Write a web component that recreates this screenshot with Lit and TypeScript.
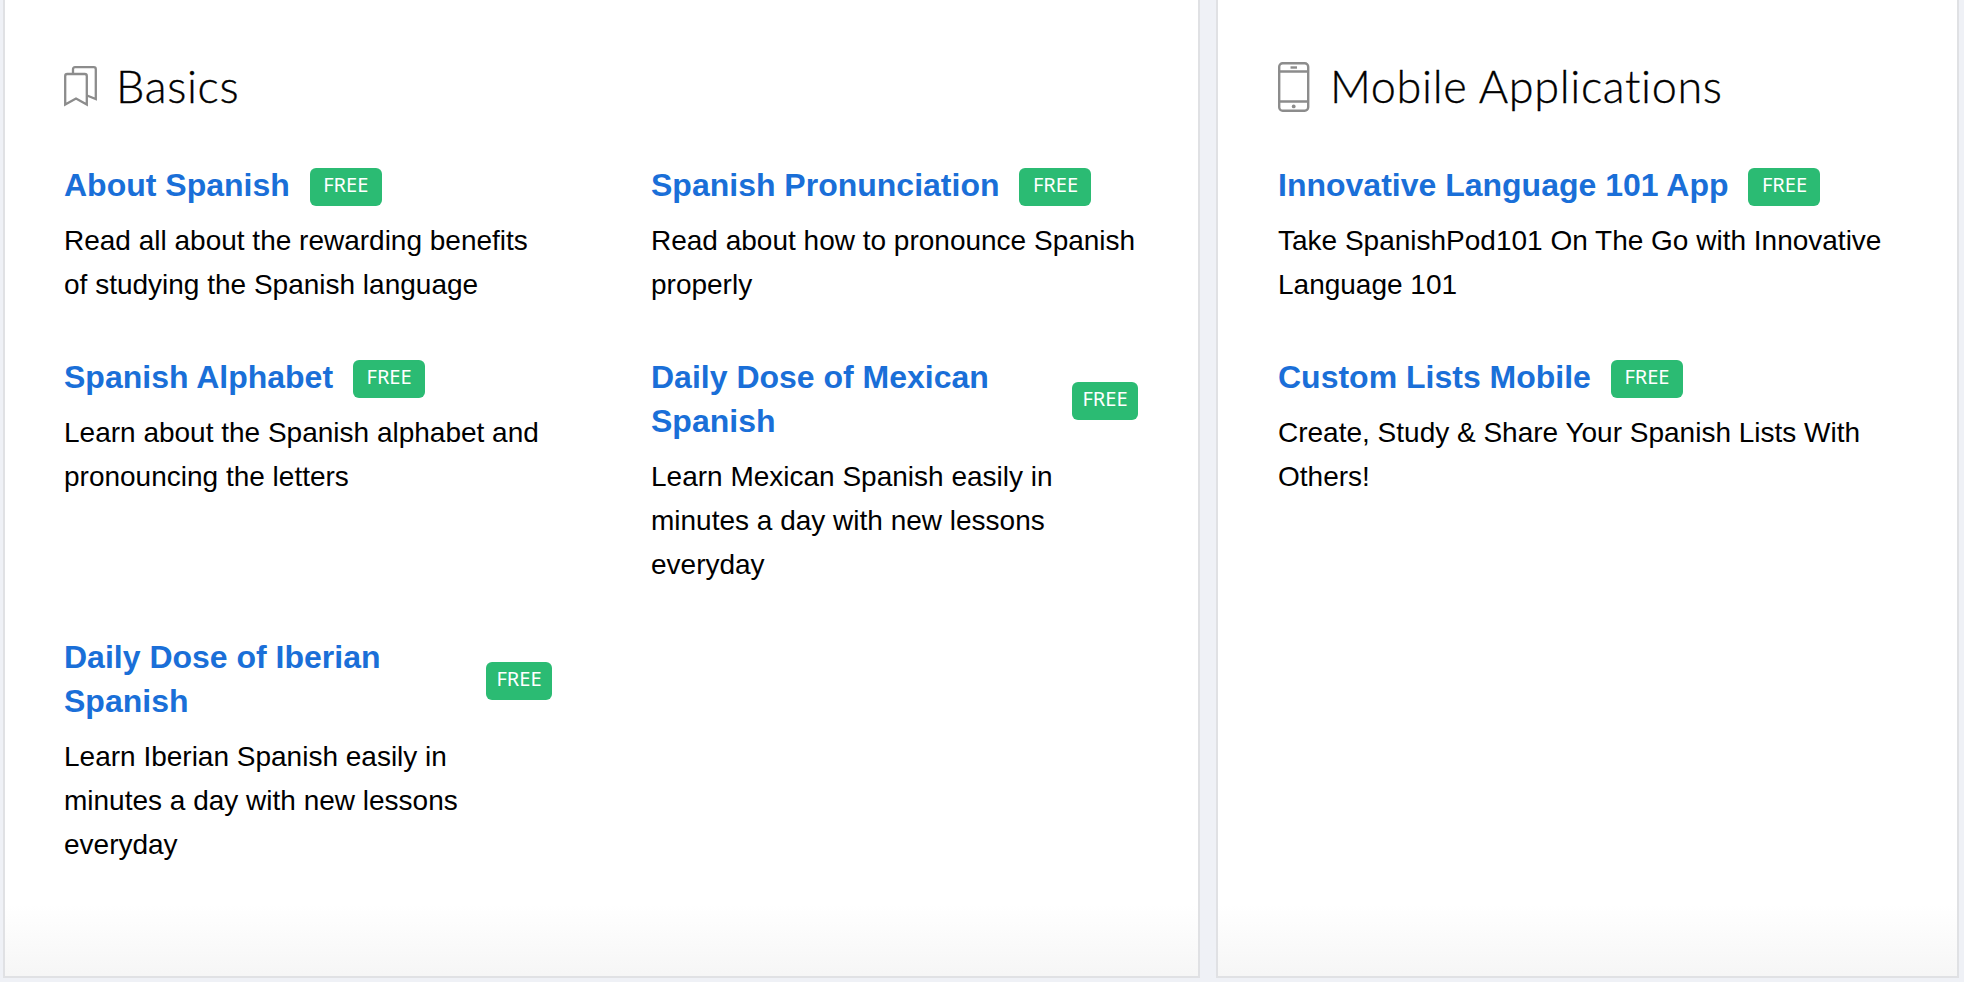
import { LitElement, html, css } from "lit";
import { customElement } from "lit/decorators.js";

type Item = { title: string; desc: string[]; wrapped?: boolean };

const basics: Item[] = [
  { title: "About Spanish", desc: ["Read all about the rewarding benefits", "of studying the Spanish language"] },
  { title: "Spanish Pronunciation", desc: ["Read about how to pronounce Spanish", "properly"] },
  { title: "Spanish Alphabet", desc: ["Learn about the Spanish alphabet and", "pronouncing the letters"] },
  { title: "Daily Dose of Mexican Spanish", wrapped: true, desc: ["Learn Mexican Spanish easily in", "minutes a day with new lessons", "everyday"] },
  { title: "Daily Dose of Iberian Spanish", wrapped: true, desc: ["Learn Iberian Spanish easily in", "minutes a day with new lessons", "everyday"] },
];
const mobile: Item[] = [
  { title: "Innovative Language 101 App", desc: ["Take SpanishPod101 On The Go with Innovative", "Language 101"] },
  { title: "Custom Lists Mobile", desc: ["Create, Study & Share Your Spanish Lists With", "Others!"] },
];

const bookmarkIcon = html`<svg class="icon" width="33" height="41" viewBox="0 0 33 41" fill="none" stroke="#8c8c8c" stroke-width="2.300">
  <path d="M1.200 38.500V10Q1.200 8 3.200 8H20.800Q22.800 8 22.800 10V38.500L12 32.500Z" />
  <path d="M9 8V3.200Q9 1.200 11 1.200H29.800Q31.800 1.200 31.800 3.200V33L23 29.500" />
</svg>`;

const phoneIcon = html`<svg class="icon" width="32" height="50" viewBox="0 0 32 50" fill="none" stroke="#8c8c8c" stroke-width="2.400">
  <rect x="1.200" y="1.200" width="29" height="47.600" rx="3.500" />
  <path d="M1.200 9.500H30.200M1.200 39.500H30.200" />
  <path d="M12.500 5.500H19" />
  <circle cx="15.700" cy="44.400" r="1.900" fill="#8c8c8c" stroke="none" />
</svg>`;

@customElement("app-root")
export class AppRoot extends LitElement {
  static styles = css`
    :host {
      display: grid;
      grid-template-columns: 1197px 743px;
      column-gap: 16px;
      height: 982px;
      box-sizing: border-box;
      padding: 0 5px 4px 3px;
      background: #eff1f6;
      overflow: hidden;
      font-family: "Liberation Sans", Arial, sans-serif;
    }
    .card {
      box-sizing: border-box;
      border: 2px solid #e0e1e4;
      border-top: none;
      padding: 56px 0 0 59px;
      background: linear-gradient(to bottom, #ffffff 0, #ffffff 905px, #f6f6f6 974px);
    }
    .card.second {
      padding-left: 60px;
    }
    .heading {
      display: flex;
      align-items: center;
      height: 60px;
      margin: 0 0 47px;
      font-family: Lato, sans-serif;
      font-weight: 300;
      font-size: 45px;
      letter-spacing: 0.65px;
      -webkit-text-stroke: 0.35px #000;
      color: #000;
    }
    .icon-slot {
      flex: none;
      width: 52px;
      display: flex;
      align-items: center;
    }
    .icon {
      display: block;
      margin-top: 1px;
    }
    .list {
      display: grid;
      grid-template-columns: 488px 487px;
      column-gap: 99px;
      row-gap: 48px;
      align-items: start;
    }
    .list.single {
      grid-template-columns: 640px;
    }
    .title-row {
      display: flex;
      align-items: center;
      column-gap: 20px;
      margin-bottom: 12px;
    }
    .title {
      font-size: 32px;
      line-height: 44px;
      font-weight: 700;
      color: #1a6fd8;
    }
    .wrapped .title {
      flex: 1;
    }
    .badge {
      flex: none;
      box-sizing: border-box;
      width: 72px;
      height: 38px;
      margin-top: 3px;
      border-radius: 6px;
      background: #2bbb73;
      color: #fff;
      font-family: "Noto Sans", sans-serif;
      font-size: 20px;
      line-height: 34px;
      text-align: center;
    }
    .wrapped .badge {
      width: 66px;
    }
    .desc {
      font-size: 28px;
      line-height: 44px;
      color: #000;
    }
    .desc span {
      display: block;
      white-space: nowrap;
    }
  `;

  private renderItem(item: Item) {
    return html`<div class="item ${item.wrapped ? "wrapped" : ""}">
      <div class="title-row">
        <div class="title">${item.title}</div>
        <div class="badge">FREE</div>
      </div>
      <div class="desc">${item.desc.map((l) => html`<span>${l}</span>`)}</div>
    </div>`;
  }

  render() {
    return html`
      <section class="card">
        <div class="heading"><span class="icon-slot">${bookmarkIcon}</span>Basics</div>
        <div class="list">${basics.map((i) => this.renderItem(i))}</div>
      </section>
      <section class="card second">
        <div class="heading"><span class="icon-slot">${phoneIcon}</span>Mobile Applications</div>
        <div class="list single">${mobile.map((i) => this.renderItem(i))}</div>
      </section>
    `;
  }
}
